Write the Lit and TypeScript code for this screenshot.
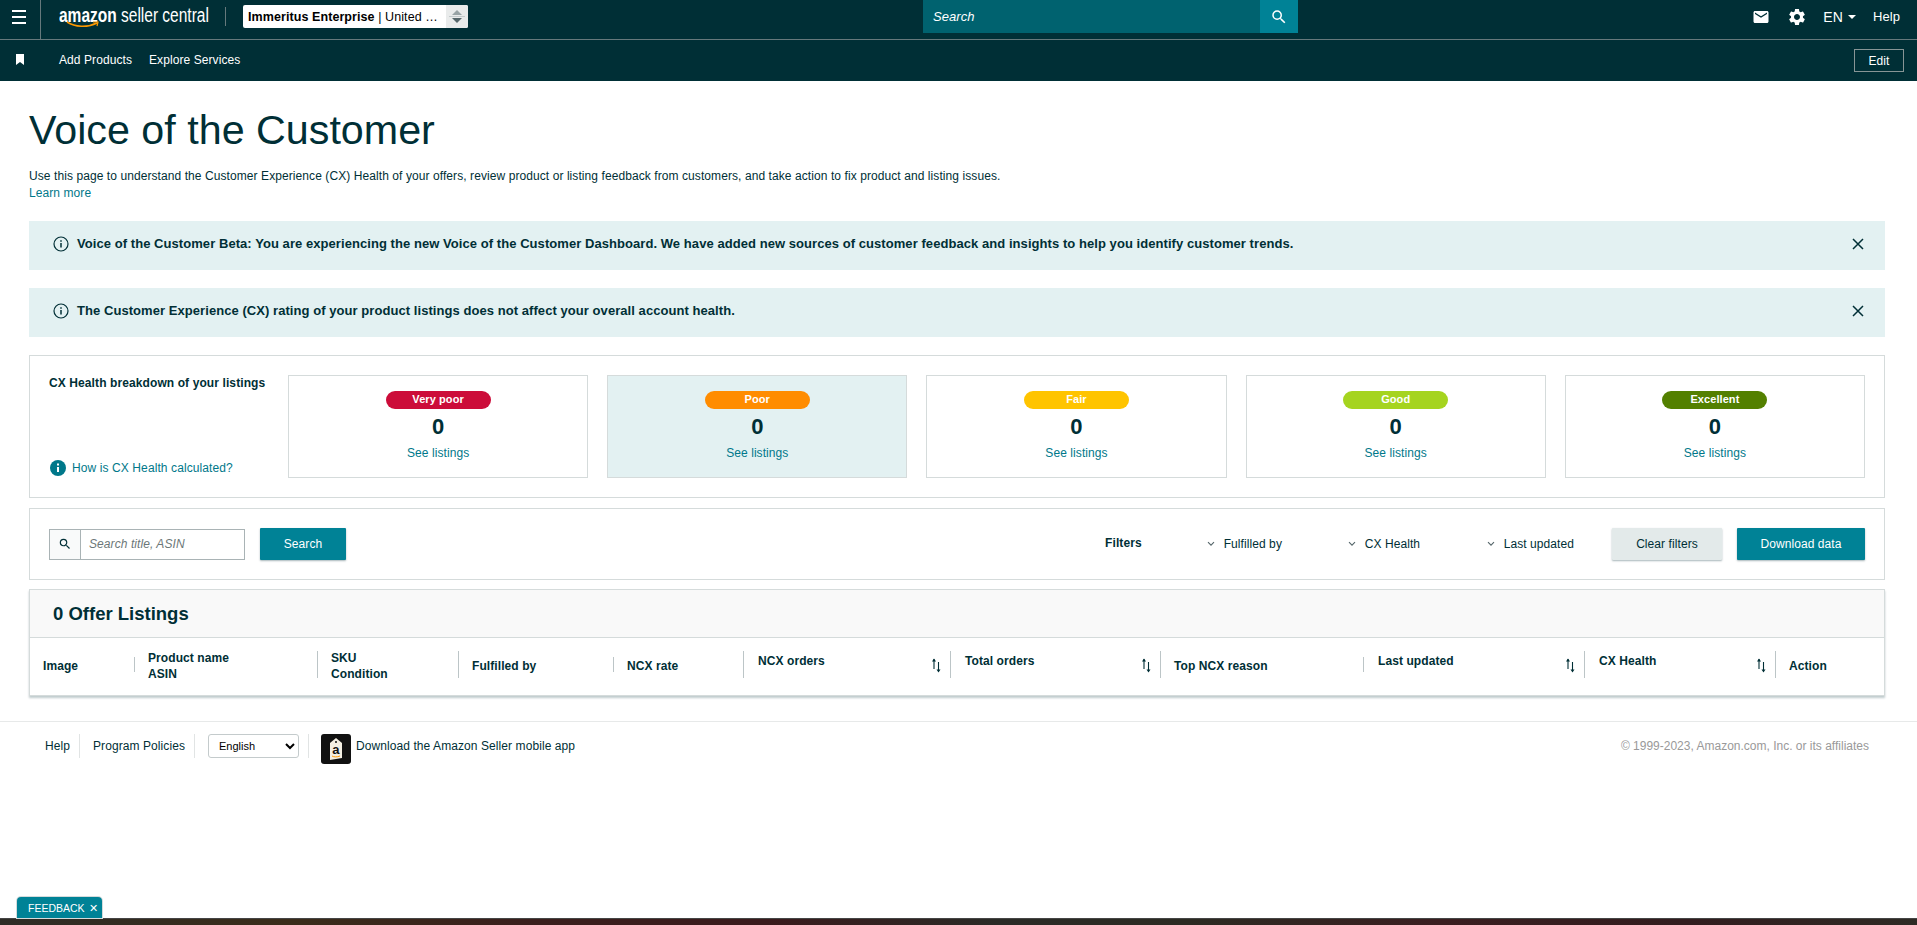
import { LitElement, css, html, svg } from 'lit';
import { customElement } from 'lit/decorators.js';

const searchPath =
  'M15.5 14h-.79l-.28-.27A6.471 6.471 0 0 0 16 9.5 6.5 6.5 0 1 0 9.5 16c1.61 0 3.09-.59 4.23-1.57l.27.28v.79l5 4.99L20.49 19l-4.99-5zm-6 0C7.01 14 5 11.99 5 9.5S7.01 5 9.5 5 14 7.01 14 9.5 11.99 14 9.5 14z';
const gearPath =
  'M19.14 12.94c.04-.3.06-.61.06-.94 0-.32-.02-.64-.07-.94l2.03-1.58c.18-.14.23-.41.12-.61l-1.92-3.32c-.12-.22-.37-.29-.59-.22l-2.39.96c-.5-.38-1.03-.7-1.62-.94l-.36-2.54c-.04-.24-.24-.41-.48-.41h-3.84c-.24 0-.43.17-.47.41l-.36 2.54c-.59.24-1.13.57-1.62.94l-2.39-.96c-.22-.08-.47 0-.59.22L2.74 8.87c-.12.21-.08.47.12.61l2.03 1.58c-.05.3-.09.63-.09.94s.02.64.07.94l-2.03 1.58c-.18.14-.23.41-.12.61l1.92 3.32c.12.22.37.29.59.22l2.39-.96c.5.38 1.03.7 1.62.94l.36 2.54c.05.24.24.41.48.41h3.84c.24 0 .44-.17.47-.41l.36-2.54c.59-.24 1.13-.56 1.62-.94l2.39.96c.22.08.47 0 .59-.22l1.92-3.32c.12-.22.07-.47-.12-.61l-2.01-1.58zM12 15.6c-1.98 0-3.6-1.62-3.6-3.6s1.62-3.6 3.6-3.6 3.6 1.62 3.6 3.6-1.62 3.6-3.6 3.6z';
const mailPath =
  'M20 4H4c-1.1 0-2 .9-2 2v12c0 1.1.9 2 2 2h16c1.1 0 2-.9 2-2V6c0-1.1-.9-2-2-2zm0 4l-8 5-8-5V6l8 5 8-5v2z';

const icon = (d: string, size: number) =>
  html`<svg width=${size} height=${size} viewBox="0 0 24 24" fill="currentColor">${svg`<path d=${d}></path>`}</svg>`;

const infoOutline = html`<svg width="16" height="16" viewBox="0 0 16 16" fill="none" stroke="#002f36" stroke-width="1.2">
  <circle cx="8" cy="8" r="7"></circle>
  <path d="M8 7v4.5" stroke-width="1.5"></path>
  <path d="M8 4.2v1.5" stroke-width="1.5"></path>
</svg>`;

const closeIcon = html`<svg width="12" height="12" viewBox="0 0 12 12" stroke="#002f36" stroke-width="1.5">
  <path d="M1 1l10 10M11 1L1 11"></path>
</svg>`;

const chevron = html`<svg width="8" height="6" viewBox="0 0 8 6" fill="none" stroke="#55666a" stroke-width="1.1">
  <path d="M1 1.2l3 3 3-3"></path>
</svg>`;

const sortIcon = html`<svg class="sort" width="10" height="15" viewBox="0 0 10 15" fill="none" stroke="#002f36" stroke-width="1.1">
  <path d="M3 11V1"></path>
  <path d="M1 3.6h4L3 .4z" fill="#002f36" stroke="none"></path>
  <path d="M7.5 4v9.5"></path>
  <path d="M5.5 11.4h4l-2 3.2z" fill="#002f36" stroke="none"></path>
</svg>`;

const ratings = [
  { label: 'Very poor', color: '#cc0c39', active: false },
  { label: 'Poor', color: '#ff8c00', active: true },
  { label: 'Fair', color: '#ffc400', active: false },
  { label: 'Good', color: '#a5d41f', active: false },
  { label: 'Excellent', color: '#538000', active: false },
];

@customElement('app-root')
export class AppRoot extends LitElement {
  static styles = css`
    :host {
      display: flex;
      flex-direction: column;
      min-height: 925px;
      position: relative;
      font-family: 'Liberation Sans', Arial, sans-serif;
      font-size: 12px;
      letter-spacing: 0.08px;
      color: #002f36;
      background: #fff;
    }
    a {
      color: #00788a;
      text-decoration: none;
    }

    /* nav */
    .nav {
      background: #002f36;
      color: #fff;
      height: 81px;
    }
    .nav-top {
      height: 39px;
      border-bottom: 1px solid #66797c;
      display: flex;
      align-items: flex-start;
      box-sizing: content-box;
    }
    .burger {
      width: 41px;
      height: 39px;
      border-right: 1px solid #66797c;
      display: flex;
      align-items: center;
      padding: 0 0 5px 12px;
      box-sizing: border-box;
    }
    .burger span {
      display: block;
      width: 14px;
      height: 10px;
      border-top: 2px solid #fff;
      border-bottom: 2px solid #fff;
      position: relative;
    }
    .burger span::after {
      content: '';
      position: absolute;
      left: 0;
      right: 0;
      top: 4px;
      height: 2px;
      background: #fff;
    }
    .logo {
      margin-left: 18px;
      width: 166px;
      height: 33px;
      position: relative;
      white-space: nowrap;
    }
    .logo .word {
      display: inline-block;
      font-size: 20px;
      line-height: 30px;
      letter-spacing: 0;
      transform: scaleX(0.775);
      transform-origin: left center;
    }
    .logo svg {
      position: absolute;
      left: 7px;
      top: 21px;
    }
    .vr {
      width: 1px;
      height: 19px;
      background: #66797c;
      margin: 7px 17px 0 0;
    }
    .account {
      margin-top: 5px;
      width: 225px;
      height: 23px;
      background: #fff;
      color: #000;
      border-radius: 2px;
      display: flex;
      align-items: center;
      font-size: 12.5px;
      padding-left: 5px;
      box-sizing: border-box;
      white-space: nowrap;
    }
    .account .name {
      flex: 1;
    }
    .account .spin {
      width: 22px;
      height: 23px;
      background: #e9ebeb;
      display: flex;
      flex-direction: column;
      align-items: center;
      justify-content: center;
      gap: 1px;
      border-radius: 0 2px 2px 0;
    }
    .up {
      width: 0;
      height: 0;
      border: 5px solid transparent;
      border-top: 0;
      border-bottom: 5px solid #98a3a5;
    }
    .down {
      width: 0;
      height: 0;
      border: 5px solid transparent;
      border-bottom: 0;
      border-top: 5px solid #55666a;
    }
    .spin i {
      display: block;
      width: 16px;
      height: 1px;
      background: #c4cbcc;
    }
    .search {
      margin-left: 455px;
      width: 375px;
      height: 33px;
      display: flex;
    }
    .search .field {
      flex: 1;
      background: #00626f;
      font-style: italic;
      font-size: 13px;
      display: flex;
      align-items: center;
      padding-left: 10px;
    }
    .search .go {
      width: 38px;
      background: #008296;
      display: flex;
      align-items: center;
      justify-content: center;
    }
    .tools {
      margin-left: auto;
      height: 33px;
      display: flex;
      align-items: center;
      font-size: 13px;
      padding-right: 17px;
    }
    .tools svg {
      display: block;
    }
    .tools .mail {
      margin-right: 17px;
    }
    .tools .lang {
      margin-left: 16px;
      display: flex;
      align-items: center;
      gap: 5px;
      margin-right: 17px;
      font-size: 14px;
    }
    .caret {
      width: 0;
      height: 0;
      border: 4px solid transparent;
      border-bottom: 0;
      border-top: 4px solid #fff;
    }
    .nav-bottom {
      height: 41px;
      display: flex;
      align-items: center;
      font-size: 12px;
      padding-right: 13px;
    }
    .nav-bottom .mark {
      width: 59px;
      padding: 0 0 2px 15px;
      box-sizing: border-box;
      display: flex;
    }
    .nav-bottom span {
      margin: 0 17px 2px 0;
    }
    .edit {
      margin-left: auto;
      width: 50px;
      height: 23px;
      border: 1px solid #879596;
      box-sizing: border-box;
      display: flex;
      align-items: center;
      justify-content: center;
    }

    /* page */
    main {
      padding: 0 32px 0 29px;
    }
    h1 {
      margin: 24px 0 0;
      font-size: 41.25px;
      line-height: 50px;
      font-weight: 400;
      letter-spacing: 0;
      color: #002f36;
    }
    .intro {
      margin: 13px 0 0;
      line-height: 17px;
      font-size: 12px;
      letter-spacing: 0.08px;
    }
    .banner {
      height: 49px;
      box-sizing: border-box;
      background: #e3f1f2;
      display: flex;
      align-items: center;
      padding: 0 21px 4px 24px;
      gap: 8px;
      font-size: 13px;
      font-weight: 700;
      letter-spacing: 0.06px;
      margin-bottom: 18px;
    }
    .banner.first {
      margin-top: 19px;
    }
    .banner span {
      flex: 1;
    }
    .panel {
      border: 1px solid #d5dbdb;
    }
    .health {
      height: 143px;
      box-sizing: border-box;
      padding: 19px;
      display: flex;
      margin-top: 2px;
      gap: 19px;
    }
    .health .side {
      width: 220px;
      display: flex;
      flex-direction: column;
      justify-content: space-between;
      font-weight: 700;
      letter-spacing: 0.1px;
      color: #002f36;
      padding: 1px 0 2px;
      box-sizing: border-box;
    }
    .health .side a {
      font-weight: 400;
      display: flex;
      align-items: center;
      gap: 6px;
      padding-left: 1px;
    }
    .cards {
      flex: 1;
      display: grid;
      grid-template-columns: repeat(5, 1fr);
      gap: 19px;
    }
    .card {
      border: 1px solid #d5dbdb;
      display: flex;
      flex-direction: column;
      align-items: center;
      padding-top: 15px;
    }
    .card.active {
      background: #e3f1f2;
    }
    .pill {
      width: 105px;
      height: 18px;
      border-radius: 9px;
      color: #fff;
      font-size: 11px;
      font-weight: 700;
      text-align: center;
      line-height: 17px;
    }
    .count {
      font-size: 22px;
      font-weight: 700;
      line-height: 30px;
      margin-top: 3px;
    }
    .card a {
      margin-top: 4px;
    }
    .filters {
      margin-top: 10px;
      height: 72px;
      box-sizing: border-box;
      padding: 0 19px;
      display: flex;
      align-items: center;
    }
    .find {
      width: 196px;
      height: 31px;
      box-sizing: border-box;
      border: 1px solid #a9b3b5;
      display: flex;
      font-style: italic;
      color: #6c7778;
      margin-right: 15px;
    }
    .find .ic {
      width: 30px;
      background: #f9fafa;
      border-right: 1px solid #a9b3b5;
      display: flex;
      align-items: center;
      justify-content: center;
      color: #002f36;
      font-style: normal;
    }
    .find .ph {
      padding-left: 8px;
      align-self: center;
    }
    .btn {
      height: 32px;
      box-sizing: border-box;
      background: #008296;
      color: #fff;
      display: flex;
      align-items: center;
      justify-content: center;
      border-radius: 1px;
      box-shadow: 0 1px 2px rgba(0, 47, 54, 0.35);
      font-weight: 400;
    }
    .btn.search-btn {
      width: 86px;
    }
    .btn.clear {
      width: 110px;
      background: #e3eaea;
      color: #002f36;
      margin-right: 15px;
      margin-left: 38px;
    }
    .btn.download {
      width: 128px;
    }
    .filter-label {
      margin-left: auto;
      font-weight: 700;
      margin-right: 65px;
      padding-bottom: 2px;
    }
    .filter {
      display: flex;
      align-items: center;
      gap: 9px;
      width: 141px;
      color: #002f36;
      white-space: nowrap;
    }
    .filter.short {
      width: 139px;
    }
    .filter.last {
      width: auto;
    }
    .table {
      margin-top: 9px;
      height: 107px;
      box-sizing: border-box;
      box-shadow: 0 2px 2px rgba(0, 47, 54, 0.25);
    }
    .table-title {
      height: 47px;
      background: #f9f9f9;
      border-bottom: 1px solid #d5dbdb;
      display: flex;
      align-items: center;
      padding-left: 23px;
      font-size: 18.5px;
      font-weight: 700;
      letter-spacing: 0;
    }
    .thead {
      display: grid;
      grid-template-columns: 104px 183px 141px 155px 130px 207px 210px 203px 221px 191px 1fr;
      height: 58px;
      font-weight: 700;
      line-height: 16px;
    }
    .th {
      display: flex;
      align-items: center;
      padding-left: 13px;
      position: relative;
      border-left: 1px solid transparent;
      box-sizing: border-box;
    }
    .th:first-child {
      padding-left: 12px;
    }
    .th.div::before {
      content: '';
      position: absolute;
      left: -1px;
      top: 13px;
      height: 27px;
      width: 1px;
      background: #bcc5c7;
    }
    .th.short::before {
      top: 19px;
      height: 15px;
    }
    .th.top {
      align-items: flex-start;
      padding: 15px 9px 0 14px;
      justify-content: space-between;
    }
    .th .sort {
      margin-top: 5px;
    }
    .th.mid,
    .th.two {
      padding-bottom: 2px;
    }

    /* footer */
    footer {
      margin: 25px 0 0;
      height: 57px;
      border-top: 1px solid #e7e9e9;
      box-sizing: border-box;
      padding: 12px 48px 0 45px;
      display: flex;
      align-items: flex-start;
    }
    footer .link {
      line-height: 24px;
      border-right: 1px solid #e1e4e4;
      padding-right: 9px;
      margin-right: 13px;
    }
    footer select {
      width: 91px;
      height: 24px;
      font: 11px 'Liberation Sans', Arial, sans-serif;
      color: #000;
      background: #fff;
      border: 1px solid #c4cbcc;
      border-radius: 3px;
      padding-left: 6px;
      margin-right: 9px;
    }
    footer .sep {
      width: 1px;
      height: 24px;
      background: #e1e4e4;
      margin-right: 12px;
    }
    footer .app {
      display: flex;
      align-items: flex-start;
      gap: 5px;
      line-height: 24px;
    }
    footer .copy {
      margin-left: auto;
      color: #999;
      line-height: 24px;
      letter-spacing: 0;
    }

    .strip {
      margin-top: auto;
      height: 7px;
      border-top: 1px solid #454545;
      box-sizing: border-box;
      background: linear-gradient(
        90deg,
        #2e2c26,
        #3a2c1a 15%,
        #3a1e1c 28%,
        #3a1a1c 40%,
        #2a2a26 52%,
        #2c2a22 62%,
        #3a1e20 75%,
        #321c1e 88%,
        #2e2a24
      );
    }
    .feedback {
      position: absolute;
      left: 17px;
      bottom: 7px;
      height: 21px;
      width: 85px;
      box-sizing: border-box;
      background: #008296;
      color: #fff;
      font-size: 10.5px;
      letter-spacing: 0;
      border-radius: 4px 4px 0 0;
      display: flex;
      align-items: center;
      padding-left: 11px;
      gap: 4px;
      box-shadow: 0 0 0 1px #d5dbdb;
    }
  `;

  render() {
    return html`
      <header class="nav">
        <div class="nav-top">
          <div class="burger"><span></span></div>
          <div class="logo">
            <span class="word"><b>amazon</b> seller central</span>
            <svg width="34" height="8" viewBox="0 0 34 8" fill="none" stroke="#ff9900" stroke-width="1.6">
              <path d="M1 1c8 5 20 6 30 1"></path>
              <path d="M27 1l5 0-1 4" stroke-width="1.2"></path>
            </svg>
          </div>
          <div class="vr"></div>
          <div class="account">
            <div class="name"><b>Immeritus Enterprise</b> | United …</div>
            <div class="spin"><div class="up"></div><i></i><div class="down"></div></div>
          </div>
          <div class="search">
            <div class="field">Search</div>
            <div class="go">${icon(searchPath, 18)}</div>
          </div>
          <div class="tools">
            <span class="mail">${icon(mailPath, 18)}</span>
            ${icon(gearPath, 20)}
            <span class="lang">EN <span class="caret"></span></span>
            <span>Help</span>
          </div>
        </div>
        <div class="nav-bottom">
          <div class="mark">
            <svg width="10" height="11" viewBox="0 0 10 11" fill="#fff"><path d="M1 0h8v11L5 8 1 11z"></path></svg>
          </div>
          <span>Add Products</span>
          <span>Explore Services</span>
          <div class="edit">Edit</div>
        </div>
      </header>

      <main>
        <h1>Voice of the Customer</h1>
        <p class="intro">
          Use this page to understand the Customer Experience (CX) Health of your offers, review product or listing
          feedback from customers, and take action to fix product and listing issues.<br />
          <a href="#">Learn more</a>
        </p>

        <div class="banner first">
          ${infoOutline}
          <span>Voice of the Customer Beta: You are experiencing the new Voice of the Customer Dashboard. We have added new sources of customer feedback and insights to help you identify customer trends.</span>
          ${closeIcon}
        </div>
        <div class="banner">
          ${infoOutline}
          <span>The Customer Experience (CX) rating of your product listings does not affect your overall account health.</span>
          ${closeIcon}
        </div>

        <section class="panel health">
          <div class="side">
            <div>CX Health breakdown of your listings</div>
            <a href="#">
              <svg width="16" height="16" viewBox="0 0 16 16">
                <circle cx="8" cy="8" r="8" fill="#00788a"></circle>
                <path d="M8 7v5M8 3.6v1.8" stroke="#fff" stroke-width="2"></path>
              </svg>
              How is CX Health calculated?
            </a>
          </div>
          <div class="cards">
            ${ratings.map(
              (r) => html`<div class="card ${r.active ? 'active' : ''}">
                <div class="pill" style="background:${r.color}">${r.label}</div>
                <div class="count">0</div>
                <a href="#">See listings</a>
              </div>`,
            )}
          </div>
        </section>

        <section class="panel filters">
          <div class="find">
            <div class="ic">${icon(searchPath, 14)}</div>
            <div class="ph">Search title, ASIN</div>
          </div>
          <div class="btn search-btn">Search</div>
          <div class="filter-label">Filters</div>
          <div class="filter">${chevron} Fulfilled by</div>
          <div class="filter short">${chevron} CX Health</div>
          <div class="filter last">${chevron} Last updated</div>
          <div class="btn clear">Clear filters</div>
          <div class="btn download">Download data</div>
        </section>

        <section class="panel table">
          <div class="table-title">0 Offer Listings</div>
          <div class="thead">
            <div class="th mid">Image</div>
            <div class="th div short two">Product name<br />ASIN</div>
            <div class="th div two">SKU<br />Condition</div>
            <div class="th div mid">Fulfilled by</div>
            <div class="th div short mid">NCX rate</div>
            <div class="th div top"><span>NCX orders</span>${sortIcon}</div>
            <div class="th div top"><span>Total orders</span>${sortIcon}</div>
            <div class="th div mid">Top NCX reason</div>
            <div class="th div short top"><span>Last updated</span>${sortIcon}</div>
            <div class="th div top"><span>CX Health</span>${sortIcon}</div>
            <div class="th div mid">Action</div>
          </div>
        </section>
      </main>

      <footer>
        <span class="link">Help</span>
        <span class="link">Program Policies</span>
        <select><option>English</option></select>
        <div class="sep"></div>
        <div class="app">
          <svg width="30" height="30" viewBox="0 0 30 30">
            <rect width="30" height="30" rx="3" fill="#111"></rect>
            <path d="M9 9l6-5 6 5v15l-12 2z" fill="#f4efe3"></path>
            <circle cx="15" cy="8" r="1" fill="#111"></circle>
            <text x="15" y="20" text-anchor="middle" font-size="13" font-weight="700" font-family="Liberation Sans" fill="#111">a</text>
            <path d="M11 22c2 1.2 5 1.2 8 0" fill="none" stroke="#ff9900" stroke-width="1"></path>
          </svg>
          <span>Download the Amazon Seller mobile app</span>
        </div>
        <span class="copy">© 1999-2023, Amazon.com, Inc. or its affiliates</span>
      </footer>

      <div class="strip"></div>
      <div class="feedback">FEEDBACK <span>✕</span></div>
    `;
  }
}
